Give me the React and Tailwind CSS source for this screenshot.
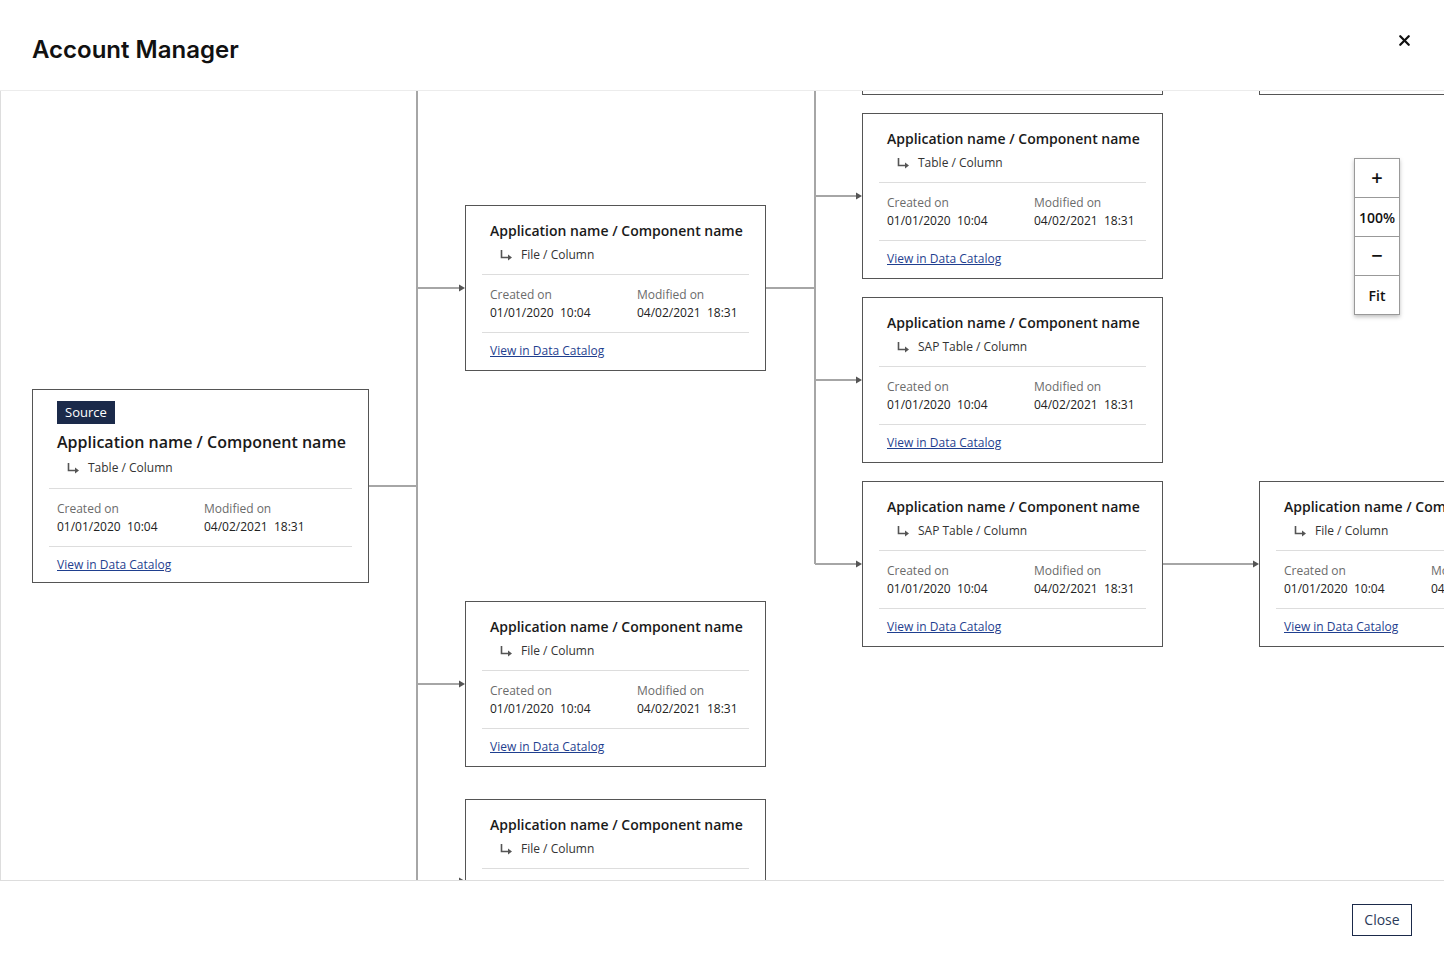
import { X } from "lucide-react";

const TOP = 91;

const nodes = [
    { x: 32, y: 389, w: 337, source: true, sub: "Table / Column" },
    { x: 465, y: 205, w: 301, sub: "File / Column" },
    { x: 465, y: 601, w: 301, sub: "File / Column" },
    { x: 465, y: 799, w: 301, sub: "File / Column" },
    { x: 862, y: -71, w: 301, sub: "Table / Column" },
    { x: 862, y: 113, w: 301, sub: "Table / Column" },
    { x: 862, y: 297, w: 301, sub: "SAP Table / Column" },
    { x: 862, y: 481, w: 301, sub: "SAP Table / Column" },
    { x: 1259, y: -71, w: 301, sub: "File / Column" },
    { x: 1259, y: 481, w: 301, sub: "File / Column" },
];

const lines = [
    "M417 0V800",
    "M369 395H417",
    "M417 197H460",
    "M417 593H460",
    "M417 790H460",
    "M766 197H815",
    "M815 0V473",
    "M815 105H857",
    "M815 289H857",
    "M815 473H857",
    "M1163 473H1254",
];

const arrows = [
    [465, 197],
    [465, 593],
    [465, 790],
    [862, 105],
    [862, 289],
    [862, 473],
    [1259, 473],
];

const SubIcon = () => (
    <svg width="14" height="12" viewBox="0 0 14 12" className="shrink-0">
        <path d="M2.5 1V8.5H9.5" fill="none" stroke="#555" strokeWidth="1.6" />
        <polygon points="9,5.5 13,8.5 9,11.5" fill="#555" />
    </svg>
);

const Node = ({ node }) => {
    return (
        <div
            className="absolute bg-white border border-[#555] px-4"
            style={{ left: node.x, top: node.y - TOP, width: node.w }}
        >
            {node.source ? (
                <div className="pt-[11px] px-2">
                    <div className="w-fit bg-[#1b2a4a] text-white text-[13px] leading-[23px] px-2">Source</div>
                    <div className="mt-[7px] text-[16px] leading-[22px] font-semibold text-[#1a1a1a] whitespace-nowrap">
                        Application name / Component name
                    </div>
                </div>
            ) : (
                <div className="pt-[15px] px-2 text-[14px] leading-[20px] font-semibold text-[#1a1a1a] whitespace-nowrap">
                    Application name / Component name
                </div>
            )}
            <div
                className={`flex items-center gap-2 pl-[17px] ${node.source ? "mt-[6px] mb-[11px]" : "mt-[5px] mb-[10px]"} text-[12px] leading-[18px] text-[#333]`}
            >
                <SubIcon />
                <span>{node.sub}</span>
            </div>
            <div className="border-t border-[#ddd] pt-[11px] pb-[10px] px-2 flex text-[12px] leading-[18px] whitespace-pre">
                <div className="w-[147px]">
                    <div className="text-[#6b6b6b]">Created on</div>
                    <div className="text-[#222]">01/01/2020  10:04</div>
                </div>
                <div>
                    <div className="text-[#6b6b6b]">Modified on</div>
                    <div className="text-[#222]">04/02/2021  18:31</div>
                </div>
            </div>
            <div
                className={`border-t border-[#ddd] pt-[9px] ${node.source ? "pb-[8px]" : "pb-[10px]"} px-2 text-[12px] leading-[18px]`}
            >
                <a href="#" className="text-[#1f3f8f] underline whitespace-nowrap">View in Data Catalog</a>
            </div>
        </div>
    );
};

const App = () => {
    return (
        <div className="w-[1444px] h-[960px] flex flex-col bg-white overflow-hidden font-['Open_Sans',sans-serif]">
            <div className="h-[91px] shrink-0 flex items-start justify-between border-b border-[#ececec] pl-[32px] pr-[31px]">
                <h1 className="mt-[34px] text-[24px] leading-[32px] font-semibold text-[#111] font-['Inter',sans-serif]">
                    Account Manager
                </h1>
                <button className="mt-[32px] text-[#111]">
                    <X size={17} strokeWidth={3.2} />
                </button>
            </div>

            <div className="relative flex-1 shadow-[inset_1px_0_0_#ddd] overflow-hidden">
                <svg className="absolute left-0 top-0" width="1444" height="789">
                    {lines.map((d) => (
                        <path key={d} d={d} fill="none" stroke="#a6a6a6" strokeWidth="2" />
                    ))}
                    {arrows.map(([x, y]) => (
                        <polygon key={`${x}-${y}`} points={`${x - 6},${y - 3.5} ${x},${y} ${x - 6},${y + 3.5}`} fill="#555" />
                    ))}
                </svg>
                {nodes.map((node) => (
                    <Node key={`${node.x}-${node.y}`} node={node} />
                ))}

                <div className="absolute left-[1354px] top-[67px] w-[46px] bg-white border border-[#999] shadow-[0_2px_4px_rgba(0,0,0,0.25)] flex flex-col text-[#111]">
                    <button className="h-[39px] flex items-center justify-center border-b border-[#999] text-[20px] font-semibold">+</button>
                    <div className="h-[39px] flex items-center justify-center border-b border-[#999] text-[14px] font-semibold">100%</div>
                    <button className="h-[39px] flex items-center justify-center border-b border-[#999] text-[20px] font-semibold">−</button>
                    <button className="h-[38px] flex items-center justify-center text-[14px] font-semibold">Fit</button>
                </div>
            </div>

            <div className="h-[80px] shrink-0 border-t border-[#ddd] flex justify-end items-start pr-[32px] pt-[23px]">
                <button className="w-[60px] h-[32px] border border-[#1b2a4a] text-[14px] leading-[20px] text-[#2b3a5a]">Close</button>
            </div>
        </div>
    );
};

export default App;
